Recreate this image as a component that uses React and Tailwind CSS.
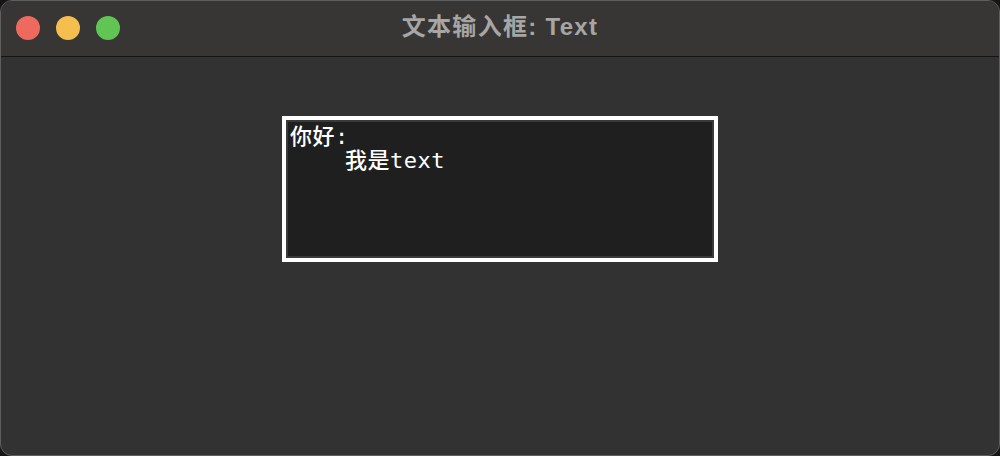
export default function App() {
  return (
    <div className="w-[1000px] h-[456px] bg-[#161616]">
      <div className="w-full h-full rounded-[12px] border border-[#5f5f5f] overflow-hidden flex flex-col bg-[#323232]">
        {/* title bar */}
        <div className="h-[56px] shrink-0 bg-[#383634] border-b border-[#151515] relative flex items-center justify-center">
          <div className="absolute left-[15px] top-[15px] flex gap-[16px]">
            <span className="w-[24px] h-[24px] rounded-full bg-[#ee6a5f]" />
            <span className="w-[24px] h-[24px] rounded-full bg-[#f5bf4f]" />
            <span className="w-[24px] h-[24px] rounded-full bg-[#61c554]" />
          </div>
          <span
            className="text-[24px] font-bold text-[#a6a6a6] tracking-[1.3px] -mt-[3px]"
            style={{ fontFamily: '"Liberation Sans", "Noto Sans CJK SC", sans-serif' }}
          >
            文本输入框: Text
          </span>
        </div>
        {/* content */}
        <div className="flex-1 flex justify-center pt-[59px]">
          <div className="w-[436px] h-[146px] border-[4px] border-white">
            <div className="w-full h-full border-[2px] border-[#3a3a3a] bg-[#1f1f1f] px-[2px] pt-[3px]">
              <pre
                className="text-[22px] leading-[24px] tracking-[0.5px] font-medium text-white whitespace-pre"
                style={{ fontFamily: '"DejaVu Sans Mono", "Noto Sans CJK SC", monospace' }}
              >
                {"你好:\n    我是text"}
              </pre>
            </div>
          </div>
        </div>
      </div>
    </div>
  );
}
